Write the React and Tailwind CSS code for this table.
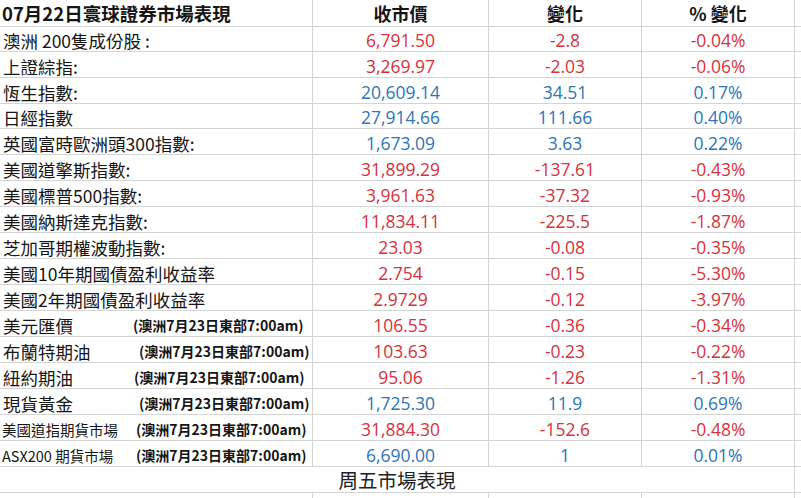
const RED = "text-[#d6323a]";
const BLUE = "text-[#2e75b6]";

const rows = [
  { label: "澳洲 200隻成份股 :", value: "6,791.50", change: "-2.8", pct: "-0.04%", up: false, h: "h-[25px]" },
  { label: "上證綜指:", value: "3,269.97", change: "-2.03", pct: "-0.06%", up: false, h: "h-[26px]" },
  { label: "恆生指數:", value: "20,609.14", change: "34.51", pct: "0.17%", up: true, h: "h-[26px]" },
  { label: "日經指數", value: "27,914.66", change: "111.66", pct: "0.40%", up: true, h: "h-[25px]" },
  { label: "英國富時歐洲頭300指數:", value: "1,673.09", change: "3.63", pct: "0.22%", up: true, h: "h-[26px]" },
  { label: "美國道擎斯指數:", value: "31,899.29", change: "-137.61", pct: "-0.43%", up: false, h: "h-[26px]" },
  { label: "美國標普500指數:", value: "3,961.63", change: "-37.32", pct: "-0.93%", up: false, h: "h-[26px]" },
  { label: "美國納斯達克指數:", value: "11,834.11", change: "-225.5", pct: "-1.87%", up: false, h: "h-[26px]" },
  { label: "芝加哥期權波動指數:", value: "23.03", change: "-0.08", pct: "-0.35%", up: false, h: "h-[26px]" },
  { label: "美國10年期國債盈利收益率", value: "2.754", change: "-0.15", pct: "-5.30%", up: false, h: "h-[26px]" },
  { label: "美國2年期國債盈利收益率", value: "2.9729", change: "-0.12", pct: "-3.97%", up: false, h: "h-[26px]" },
  { label: "美元匯價", value: "106.55", change: "-0.36", pct: "-0.34%", up: false, h: "h-[26px]", note: "w-[130px]" },
  { label: "布蘭特期油", value: "103.63", change: "-0.23", pct: "-0.22%", up: false, h: "h-[26px]", note: "w-[136px]" },
  { label: "紐約期油", value: "95.06", change: "-1.26", pct: "-1.31%", up: false, h: "h-[26px]", note: "w-[131px]" },
  { label: "現貨黃金", value: "1,725.30", change: "11.9", pct: "0.69%", up: true, h: "h-[26px]", note: "w-[136px]" },
  { label: "美國道指期貨市場", value: "31,884.30", change: "-152.6", pct: "-0.48%", up: false, h: "h-[26px]", note: "w-[134px]", small: true },
  { label: "ASX200 期貨市場", value: "6,690.00", change: "1", pct: "0.01%", up: true, h: "h-[26px]", note: "w-[134px]", small: true },
];

const cjk = "font-['Noto_Sans_CJK_TC','Noto_Sans',sans-serif]";
const num = "font-['Open_Sans','Noto_Sans',sans-serif]";
const line = "border-[#d4d4d4]";

function NumCell({ children, color, w }) {
  return (
    <div className={`${w} shrink-0 border-r ${line} flex items-center justify-center pt-[3px] ${num} text-[17.5px] leading-[21px] ${color}`}>
      {children}
    </div>
  );
}

export default function App() {
  return (
    <div className="w-[801px] h-[498px] overflow-hidden bg-white text-[#151515]">
      {/* header */}
      <div className={`flex h-[27px] border-b ${line}`}>
        <div className={`w-[313px] shrink-0 border-r ${line} flex items-center pl-[2px] ${cjk} font-bold text-[18.5px] leading-[24px] whitespace-nowrap`}>
          07月22日寰球證券市場表現
        </div>
        <div className={`w-[176px] shrink-0 border-r ${line} flex items-center justify-center ${cjk} font-bold text-[18px] leading-[24px]`}>
          收市價
        </div>
        <div className={`w-[153px] shrink-0 border-r ${line} flex items-center justify-center ${cjk} font-bold text-[18px] leading-[24px]`}>
          變化
        </div>
        <div className={`w-[153px] shrink-0 border-r ${line} flex items-center justify-center ${cjk} font-bold text-[18px] leading-[24px]`}>
          % 變化
        </div>
        <div className="flex-1" />
      </div>

      {rows.map((r) => {
        const color = r.up ? BLUE : RED;
        return (
          <div key={r.label} className={`flex ${r.h} border-b ${line}`}>
            <div className={`w-[313px] shrink-0 border-r ${line} flex items-center pt-[3px] pl-[3px] ${cjk} leading-[21px] whitespace-nowrap`}>
              {r.note ? (
                <>
                  <span className={`${r.note} shrink-0 ${r.small ? "text-[14.5px] -ml-[1px]" : "text-[17.5px]"}`}>{r.label}</span>
                  <span className="text-[14px] font-bold">(澳洲7月23日東部7:00am)</span>
                </>
              ) : (
                <span className="text-[17.5px]">{r.label}</span>
              )}
            </div>
            <NumCell color={color} w="w-[176px]">{r.value}</NumCell>
            <NumCell color={color} w="w-[153px]">{r.change}</NumCell>
            <NumCell color={color} w="w-[153px]">{r.pct}</NumCell>
            <div className="flex-1" />
          </div>
        );
      })}

      {/* merged footer row */}
      <div className={`flex h-[26px] border-b ${line}`}>
        <div className={`w-[795px] shrink-0 border-r ${line} flex items-center justify-center ${cjk} text-[19.5px] leading-[24px] text-[#222]`}>
          周五市場表現
        </div>
        <div className="flex-1" />
      </div>

      <div className="flex h-[6px]">
        <div className={`w-[313px] shrink-0 border-r ${line}`} />
        <div className={`w-[176px] shrink-0 border-r ${line}`} />
        <div className={`w-[153px] shrink-0 border-r ${line}`} />
        <div className={`w-[153px] shrink-0 border-r ${line}`} />
        <div className="flex-1" />
      </div>
    </div>
  );
}
